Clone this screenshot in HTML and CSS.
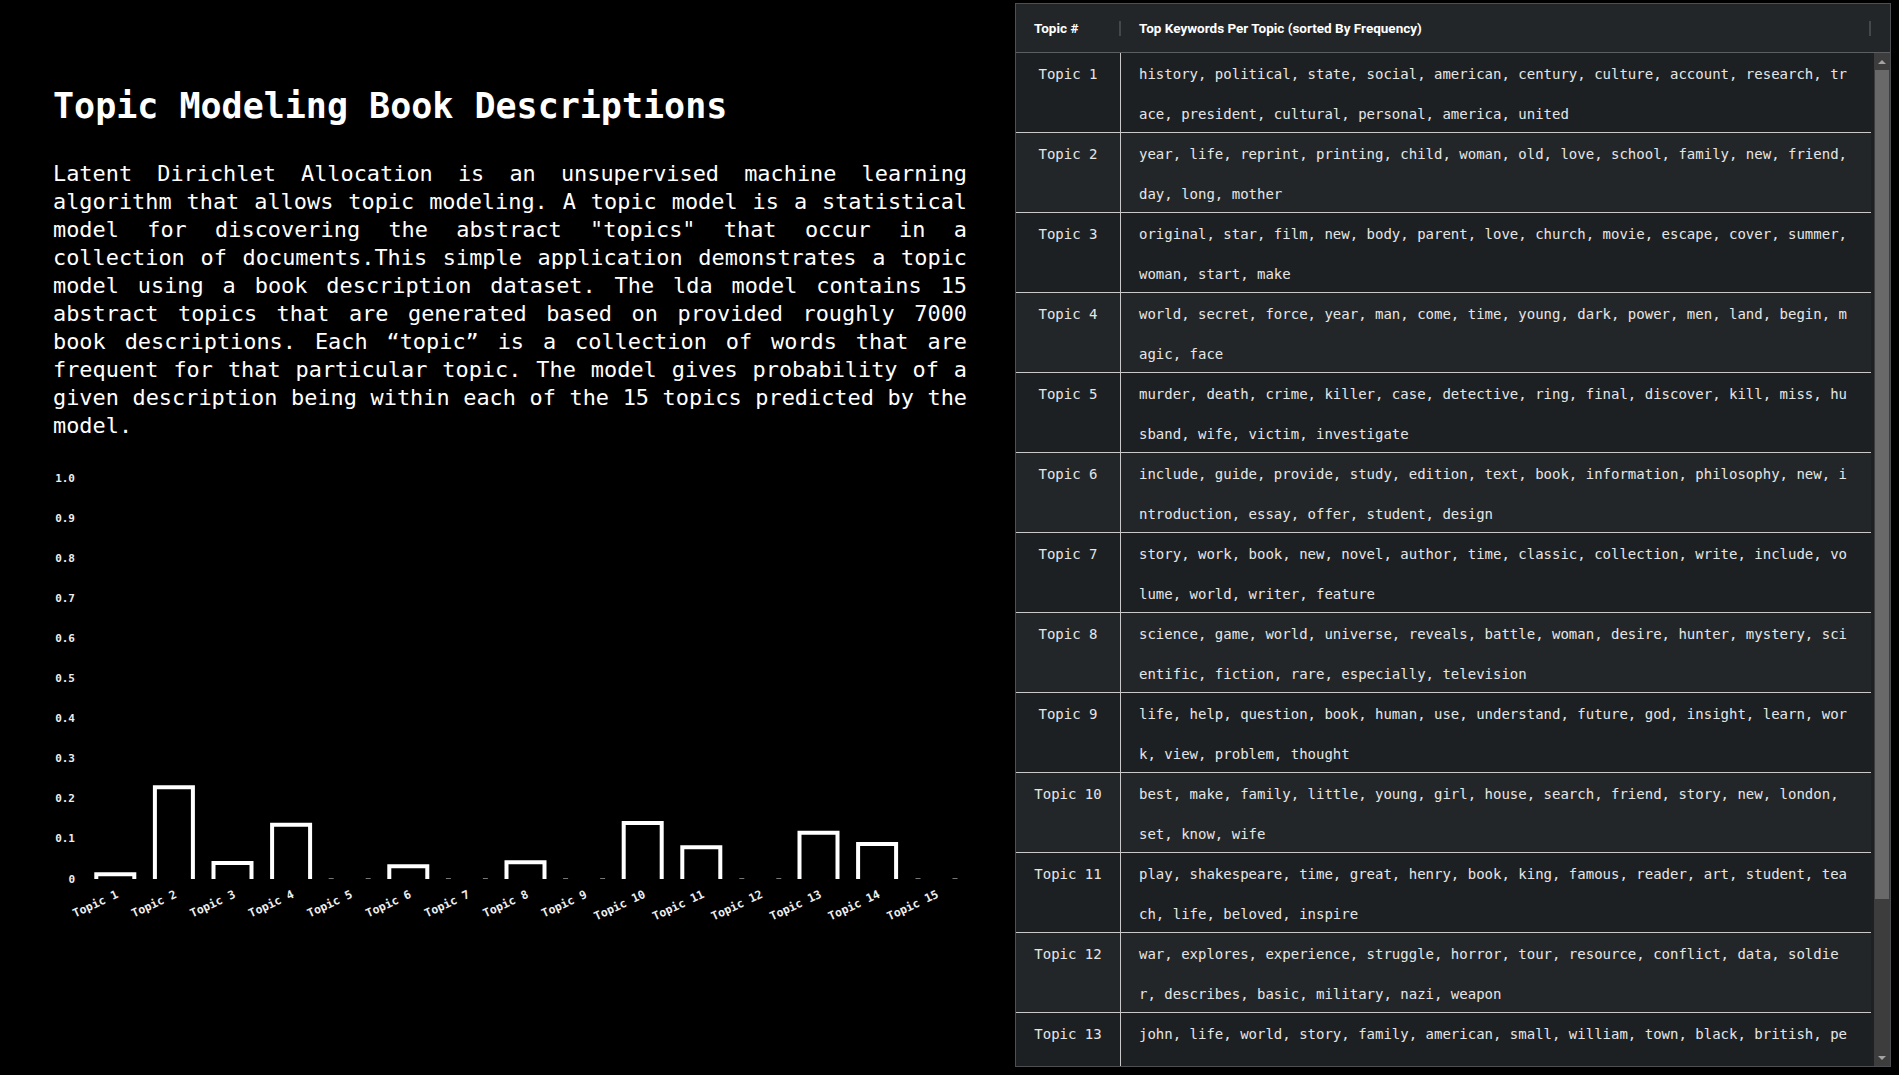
FILE: index.html
```html
<!DOCTYPE html>
<html>
<head>
<meta charset="utf-8">
<title>Topic Modeling Book Descriptions</title>
<link rel="stylesheet" href="styles.css">
</head>
<body>
<div class="page">
  <section class="left">
    <h1 class="title">Topic Modeling Book Descriptions</h1>
    <p class="intro">Latent Dirichlet Allocation is an unsupervised machine learning algorithm that allows topic modeling. A topic model is a statistical model for discovering the abstract "topics" that occur in a collection of documents.This simple application demonstrates a topic model using a book description dataset. The lda model contains 15 abstract topics that are generated based on provided roughly 7000 book descriptions. Each “topic” is a collection of words that are frequent for that particular topic. The model gives probability of a given description being within each of the 15 topics predicted by the model.</p>
    <svg class="chart" width="960" height="480" viewBox="0 0 960 480">
      <g class="ylabels">
        <text x="22" y="429">0</text>
        <text x="22" y="388.9">0.1</text>
        <text x="22" y="348.8">0.2</text>
        <text x="22" y="308.7">0.3</text>
        <text x="22" y="268.6">0.4</text>
        <text x="22" y="228.5">0.5</text>
        <text x="22" y="188.4">0.6</text>
        <text x="22" y="148.3">0.7</text>
        <text x="22" y="108.2">0.8</text>
        <text x="22" y="68.1">0.9</text>
        <text x="22" y="28">1.0</text>
      </g>
      <g class="bars">
        <path d="M43.3 429 V424.3 H81.3 V429"/>
        <path d="M101.9 429 V337.3 H139.9 V429"/>
        <path d="M160.5 429 V413 H198.5 V429"/>
        <path d="M219.1 429 V374.7 H257.1 V429"/>
        <path d="M336.3 429 V416.3 H374.3 V429"/>
        <path d="M453.5 429 V412.3 H491.5 V429"/>
        <path d="M570.7 429 V373 H608.7 V429"/>
        <path d="M629.3 429 V397.3 H667.3 V429"/>
        <path d="M746.5 429 V382.7 H784.5 V429"/>
        <path d="M805.1 429 V394 H843.1 V429"/>
      </g>
      <g class="zeros">
        <path d="M275.7 428.5 h5 M312.7 428.5 h5"/>
        <path d="M392.9 428.5 h5 M429.9 428.5 h5"/>
        <path d="M510.1 428.5 h5 M547.1 428.5 h5"/>
        <path d="M686.3 428.5 h5 M723.3 428.5 h5"/>
        <path d="M862.5 428.5 h5 M899.5 428.5 h5"/>
      </g>
      <g class="xlabels">
        <text x="66" y="447" transform="rotate(-25 66 447)">Topic 1</text>
        <text x="124.6" y="447" transform="rotate(-25 124.6 447)">Topic 2</text>
        <text x="183.2" y="447" transform="rotate(-25 183.2 447)">Topic 3</text>
        <text x="241.8" y="447" transform="rotate(-25 241.8 447)">Topic 4</text>
        <text x="300.4" y="447" transform="rotate(-25 300.4 447)">Topic 5</text>
        <text x="359" y="447" transform="rotate(-25 359 447)">Topic 6</text>
        <text x="417.6" y="447" transform="rotate(-25 417.6 447)">Topic 7</text>
        <text x="476.2" y="447" transform="rotate(-25 476.2 447)">Topic 8</text>
        <text x="534.8" y="447" transform="rotate(-25 534.8 447)">Topic 9</text>
        <text x="593.4" y="447" transform="rotate(-25 593.4 447)">Topic 10</text>
        <text x="652" y="447" transform="rotate(-25 652 447)">Topic 11</text>
        <text x="710.6" y="447" transform="rotate(-25 710.6 447)">Topic 12</text>
        <text x="769.2" y="447" transform="rotate(-25 769.2 447)">Topic 13</text>
        <text x="827.8" y="447" transform="rotate(-25 827.8 447)">Topic 14</text>
        <text x="886.4" y="447" transform="rotate(-25 886.4 447)">Topic 15</text>
      </g>
    </svg>
  </section>

  <section class="right">
    <div class="table-box">
      <div class="thead">
        <div class="th th-num">Topic #</div>
        <div class="th th-kw">Top Keywords Per Topic (sorted By Frequency)</div>
      </div>
      <div class="tbody">
        <div class="rows">
          <div class="row"><div class="cell num">Topic 1</div><div class="cell kw">history, political, state, social, american, century, culture, account, research, trace, president, cultural, personal, america, united</div></div>
          <div class="row"><div class="cell num">Topic 2</div><div class="cell kw">year, life, reprint, printing, child, woman, old, love, school, family, new, friend, day, long, mother</div></div>
          <div class="row"><div class="cell num">Topic 3</div><div class="cell kw">original, star, film, new, body, parent, love, church, movie, escape, cover, summer, woman, start, make</div></div>
          <div class="row"><div class="cell num">Topic 4</div><div class="cell kw">world, secret, force, year, man, come, time, young, dark, power, men, land, begin, magic, face</div></div>
          <div class="row"><div class="cell num">Topic 5</div><div class="cell kw">murder, death, crime, killer, case, detective, ring, final, discover, kill, miss, husband, wife, victim, investigate</div></div>
          <div class="row"><div class="cell num">Topic 6</div><div class="cell kw">include, guide, provide, study, edition, text, book, information, philosophy, new, introduction, essay, offer, student, design</div></div>
          <div class="row"><div class="cell num">Topic 7</div><div class="cell kw">story, work, book, new, novel, author, time, classic, collection, write, include, volume, world, writer, feature</div></div>
          <div class="row"><div class="cell num">Topic 8</div><div class="cell kw">science, game, world, universe, reveals, battle, woman, desire, hunter, mystery, scientific, fiction, rare, especially, television</div></div>
          <div class="row"><div class="cell num">Topic 9</div><div class="cell kw">life, help, question, book, human, use, understand, future, god, insight, learn, work, view, problem, thought</div></div>
          <div class="row"><div class="cell num">Topic 10</div><div class="cell kw">best, make, family, little, young, girl, house, search, friend, story, new, london, set, know, wife</div></div>
          <div class="row"><div class="cell num">Topic 11</div><div class="cell kw">play, shakespeare, time, great, henry, book, king, famous, reader, art, student, teach, life, beloved, inspire</div></div>
          <div class="row"><div class="cell num">Topic 12</div><div class="cell kw">war, explores, experience, struggle, horror, tour, resource, conflict, data, soldier, describes, basic, military, nazi, weapon</div></div>
          <div class="row"><div class="cell num">Topic 13</div><div class="cell kw">john, life, world, story, family, american, small, william, town, black, british, people, city, mother, land</div></div>
          <div class="row"><div class="cell num">Topic 14</div><div class="cell kw">love, man, woman, heart, life, find, relationship, romance, passion, past, secret, marriage, return, town, family</div></div>
          <div class="row"><div class="cell num">Topic 15</div><div class="cell kw">business, money, company, success, market, strategy, management, leader, people, work, change, idea, practical, tool, career</div></div>
        </div>
        <div class="scrollbar">
          <div class="sb-btn sb-up"></div>
          <div class="sb-track"><div class="sb-thumb"></div></div>
          <div class="sb-btn sb-down"></div>
        </div>
      </div>
    </div>
  </section>
</div>
</body>
</html>
```

FILE: styles.css
```css
html, body {
  margin: 0;
  padding: 0;
  background: #000;
}

.page {
  display: flex;
  align-items: flex-start;
  width: 1899px;
  height: 1075px;
  overflow: hidden;
}

.left {
  width: 1015px;
  flex: 0 0 1015px;
  padding-left: 53px;
  box-sizing: border-box;
  color: #fff;
  font-family: "DejaVu Sans Mono", "Liberation Mono", monospace;
}

.title {
  margin: 86px 0 0 0;
  font-size: 35px;
  line-height: 40px;
  font-weight: bold;
  white-space: nowrap;
}

.intro {
  margin: 34px 0 0 0;
  width: 914px;
  font-size: 21.9px;
  line-height: 28px;
  text-align: justify;
}

.chart {
  display: block;
  margin-top: 10px;
  overflow: visible;
}

.ylabels text {
  fill: #eee;
  font-family: "DejaVu Sans Mono", monospace;
  font-size: 11px;
  font-weight: bold;
  text-anchor: end;
  dominant-baseline: central;
}

.bars path {
  fill: none;
  stroke: #fff;
  stroke-width: 4;
}

.zeros path {
  fill: none;
  stroke: #777;
  stroke-width: 1;
}

.xlabels text {
  fill: #eee;
  font-family: "DejaVu Sans Mono", monospace;
  font-size: 11.5px;
  font-weight: bold;
  text-anchor: end;
}

.right {
  flex: 0 0 876px;
  width: 876px;
  margin-top: 3px;
}

.table-box {
  height: 1064px;
  box-sizing: border-box;
  border: 1px solid #4d4f52;
  background: #1e2124;
  display: flex;
  flex-direction: column;
}

.thead {
  display: flex;
  height: 48px;
  flex: 0 0 48px;
  border-bottom: 1px solid #5c5e61;
  background: #232629;
  align-items: center;
}

.th {
  position: relative;
  color: #fff;
  font-family: "Liberation Sans Narrow", "Roboto", sans-serif;
  font-weight: bold;
  font-size: 13.5px;
  padding-left: 18px;
  box-sizing: border-box;
  height: 100%;
  display: flex;
  align-items: center;
}

.th-num {
  width: 105px;
  flex: 0 0 105px;
}

.th-kw {
  width: 750px;
  flex: 0 0 750px;
}

.th::after {
  content: "";
  position: absolute;
  right: 0;
  top: 17px;
  width: 2px;
  height: 15px;
  background: #45484b;
}

.tbody {
  flex: 1 1 auto;
  min-height: 0;
  display: flex;
  overflow: hidden;
}

.rows {
  width: 855px;
  flex: 0 0 855px;
}

.row {
  display: grid;
  grid-template-columns: 105px 750px;
  height: 80px;
  box-sizing: border-box;
  overflow: hidden;
  border-bottom: 1px solid #c9c9c9;
  font-family: "DejaVu Sans Mono", "Liberation Mono", monospace;
  font-size: 14px;
  line-height: 39.5px;
  color: #e6e6e6;
}

.row:nth-child(odd) {
  background: #1d2023;
}

.row:nth-child(even) {
  background: #232629;
}

.cell {
  box-sizing: border-box;
  padding-top: 2px;
}

.num {
  text-align: center;
  border-right: 1px solid #c9c9c9;
  white-space: nowrap;
}

.kw {
  padding-left: 18px;
  padding-right: 18px;
  word-break: break-all;
}

.scrollbar {
  flex: 0 0 16px;
  width: 16px;
  margin-left: 3px;
  background: #3d3d3d;
  display: flex;
  flex-direction: column;
}

.sb-btn {
  flex: 0 0 17px;
  height: 17px;
  display: flex;
  align-items: center;
  justify-content: center;
}

.sb-btn::before {
  content: "";
  width: 0;
  height: 0;
  border-left: 4px solid transparent;
  border-right: 4px solid transparent;
}

.sb-up::before {
  border-bottom: 4px solid #a3a3a3;
}

.sb-down::before {
  border-top: 4px solid #a3a3a3;
}

.sb-track {
  flex: 1 1 auto;
}

.sb-thumb {
  height: 829px;
  margin: 0 1px;
  background: #696969;
}
```
